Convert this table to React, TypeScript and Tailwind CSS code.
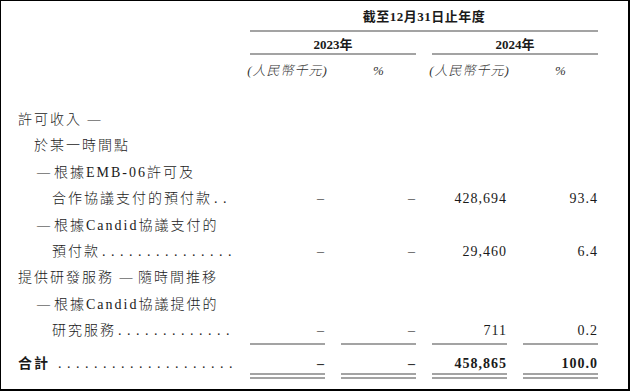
const serif = "font-['Liberation_Serif','Noto_Sans_CJK_TC',serif]";

function Dots({ n }: { n: number }) {
  return <span className="ml-[2px] tracking-[5.5px]">{".".repeat(n)}</span>;
}

function Dash() {
  return <span className="relative -top-[1px] inline-block w-[17px] text-[13px]">—</span>;
}

function Val({ v, line, bold }: { v?: string; line?: string; bold?: boolean }) {
  const isDash = v === "–";
  return (
    <div className={`flex h-full justify-end ${line ?? ""}`}>
      <span
        className={`tracking-[1px] ${isDash ? "text-[#555]" : "text-[#1a1a1a]"} ${bold ? "font-bold" : ""}`}
      >
        {v}
      </span>
    </div>
  );
}

export default function App() {
  return (
    <div
      className={`h-[391px] w-[630px] border-t border-r-2 border-b-2 border-l border-black bg-white pl-[17px] text-[14px] leading-[18px] text-[#1a1a1a] ${serif}`}
    >
      {/* Column headers */}
      <div className="grid grid-cols-[216px_75px_75px_75px_75px] gap-x-4">
        <div className="col-span-4 col-start-2 flex h-[31px] items-center justify-center border-b-2 border-[#a3a3a3] pt-[3px] text-[13px] font-bold tracking-[0.5px]">
          截至12月31日止年度
        </div>
      </div>
      <div className="grid grid-cols-[216px_75px_75px_75px_75px] gap-x-4">
        <div className="col-span-2 col-start-2 flex h-[23px] items-center justify-center border-b-2 border-[#a3a3a3] pt-[5px] text-[13px] font-bold">
          2023年
        </div>
        <div className="col-span-2 flex h-[23px] items-center justify-center border-b-2 border-[#a3a3a3] pt-[5px] text-[13px] font-bold">
          2024年
        </div>
      </div>
      <div className="grid h-[32px] grid-cols-[216px_75px_75px_75px_75px] items-center gap-x-4 text-[13px] font-light italic text-[#333]">
        <div className="col-start-2 flex justify-center whitespace-nowrap tracking-[1px]">(人民幣千元)</div>
        <div className="text-center">%</div>
        <div className="flex justify-center whitespace-nowrap tracking-[1px]">(人民幣千元)</div>
        <div className="text-center">%</div>
      </div>

      {/* Body */}
      <div className="mt-[20px] grid grid-cols-[216px_75px_75px_75px_75px] gap-x-4 whitespace-nowrap [&>div]:h-[26.4px] [&>div]:leading-[26.4px]">
        <div className="col-span-5 font-light tracking-[2px]">
          許可收入 <span className="relative -top-[1px] text-[13px] tracking-normal">—</span>
        </div>

        <div className="col-span-5 pl-[16px] font-light tracking-[2px]">於某一時間點</div>

        <div className="col-span-5 pl-[19px] font-light tracking-[2px]">
          <Dash />
          根據EMB-06許可及
        </div>

        <div className="pl-[34px] font-light tracking-[2px]">
          合作協議支付的預付款
          <Dots n={2} />
        </div>
        <Val v="–" />
        <Val v="–" />
        <Val v="428,694" />
        <Val v="93.4" />

        <div className="col-span-5 pl-[19px] font-light tracking-[2px]">
          <Dash />
          根據Candid協議支付的
        </div>

        <div className="pl-[34px] font-light tracking-[2px]">
          預付款
          <Dots n={15} />
        </div>
        <Val v="–" />
        <Val v="–" />
        <Val v="29,460" />
        <Val v="6.4" />

        <div className="col-span-5 font-light tracking-[2px]">
          提供研發服務 <span className="relative -top-[1px] text-[13px] tracking-normal">—</span> 隨時間推移
        </div>

        <div className="col-span-5 pl-[19px] font-light tracking-[2px]">
          <Dash />
          根據Candid協議提供的
        </div>

        <div className="pl-[34px] font-light tracking-[2px]">
          研究服務
          <Dots n={13} />
        </div>
        <Val v="–" line="border-b-2 border-[#a3a3a3]" />
        <Val v="–" line="border-b-2 border-[#a3a3a3]" />
        <Val v="711" line="border-b-2 border-[#a3a3a3]" />
        <Val v="0.2" line="border-b-2 border-[#a3a3a3]" />
      </div>

      {/* Total */}
      <div className="grid h-[34.4px] grid-cols-[216px_75px_75px_75px_75px] gap-x-4 whitespace-nowrap">
        <div className="flex items-end pb-[6px] font-bold tracking-[2px]">
          合計
          <span className="ml-[6px] font-normal">
            <Dots n={20} />
          </span>
        </div>
        {["–", "–", "458,865", "100.0"].map((v, i) => (
          <div key={i} className="flex items-end justify-end border-b-[6px] border-double border-[#a3a3a3]">
            <span className={`font-bold tracking-[1px] ${v === "–" ? "text-[#333]" : "text-[#1a1a1a]"}`}>{v}</span>
          </div>
        ))}
      </div>
    </div>
  );
}
